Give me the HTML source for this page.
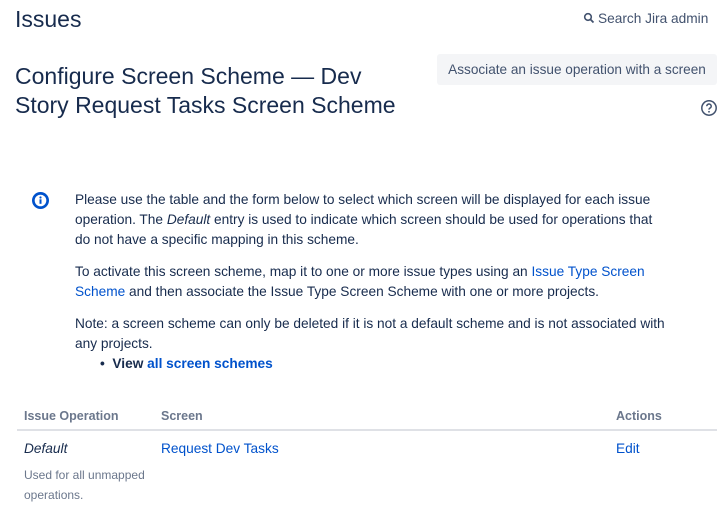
<!DOCTYPE html>
<html><head><style>
body{margin:0;width:726px;height:513px;overflow:hidden;background:#fff;font-family:"Liberation Sans",sans-serif;color:#172b4d;position:relative}
.a{position:absolute;white-space:nowrap}
.t{font-size:13.7px;line-height:20px}
a,.l{color:#0052cc;text-decoration:none}
.g{color:#6b778c}
</style></head><body>
<div class="a" style="left:15px;top:4px;font-size:23px;line-height:30px">Issues</div>
<div class="a t" style="left:583px;top:9px;color:#42526e"><svg width="12" height="12" viewBox="0 0 12 12" style="vertical-align:-1px;margin-right:3px"><circle cx="5" cy="5" r="3.3" fill="none" stroke="#42526e" stroke-width="1.6"/><path d="M7.4 7.4L10.5 10.5" stroke="#42526e" stroke-width="1.8"/></svg>Search Jira admin</div>
<div class="a" style="left:15px;top:62px;font-size:23px;line-height:29px">Configure Screen Scheme — Dev<br>Story Request Tasks Screen Scheme</div>
<div class="a" style="left:437px;top:54px;width:280px;height:31px;background:#f4f5f7;border-radius:3px;color:#42526e;font-size:13.6px;line-height:31px;text-align:center">Associate an issue operation with a screen</div>
<svg class="a" style="left:700px;top:99px" width="18" height="18" viewBox="0 0 18 18"><circle cx="9" cy="9" r="7.2" fill="none" stroke="#42526e" stroke-width="1.5"/><path d="M6.8 7.2a2.2 2.2 0 1 1 3 2c-.6.3-.8.7-.8 1.4" fill="none" stroke="#42526e" stroke-width="1.5"/><circle cx="9" cy="12.8" r=".9" fill="#42526e"/></svg>
<svg class="a" style="left:31px;top:191px" width="19" height="19" viewBox="0 0 19 19"><circle cx="9.5" cy="9.5" r="8.5" fill="#0052cc"/><circle cx="9.5" cy="9.5" r="5.8" fill="#fff"/><rect x="8.5" y="8.3" width="2" height="4.5" fill="#0052cc"/><circle cx="9.5" cy="6.5" r="1.1" fill="#0052cc"/></svg>
<div class="a t" style="left:75px;top:190px">Please use the table and the form below to select which screen will be displayed for each issue<br>operation. The <i>Default</i> entry is used to indicate which screen should be used for operations that<br>do not have a specific mapping in this scheme.</div>
<div class="a t" style="left:75px;top:262px">To activate this screen scheme, map it to one or more issue types using an <a>Issue Type Screen</a><br><a>Scheme</a> and then associate the Issue Type Screen Scheme with one or more projects.</div>
<div class="a t" style="left:75px;top:314px">Note: a screen scheme can only be deleted if it is not a default scheme and is not associated with<br>any projects.</div>
<div class="a t" style="left:100px;top:354px;font-weight:bold">•&nbsp;&nbsp;View <a>all screen schemes</a></div>
<div class="a g" style="left:24px;top:408px;font-size:12.5px;font-weight:bold;line-height:16px">Issue Operation</div>
<div class="a g" style="left:161px;top:408px;font-size:12.5px;font-weight:bold;line-height:16px">Screen</div>
<div class="a g" style="left:616px;top:408px;font-size:12.5px;font-weight:bold;line-height:16px">Actions</div>
<div class="a" style="left:17px;top:429px;width:700px;height:2px;background:#dfe1e6"></div>
<div class="a t" style="left:24px;top:439px"><i>Default</i></div>
<div class="a t l" style="left:161px;top:439px">Request Dev Tasks</div>
<div class="a t l" style="left:616px;top:439px">Edit</div>
<div class="a g" style="left:24px;top:465px;font-size:12px;line-height:20px">Used for all unmapped<br>operations.</div>
</body></html>
